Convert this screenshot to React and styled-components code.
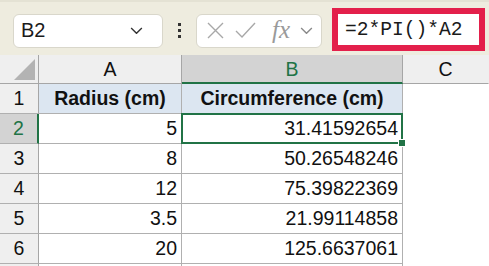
import React from "react";
import styled, { createGlobalStyle } from "styled-components";

const Global = createGlobalStyle`
  html, body { margin: 0; padding: 0; background: #ffffff; overflow: hidden; }
  body { font-family: "Liberation Sans", Arial, sans-serif; }
`;

const GREEN = "#217346";

const Page = styled.div`
  width: 489px;
  height: 266px;
  overflow: hidden;
  display: flex;
  flex-direction: column;
`;

const Toolbar = styled.div`
  height: 55px;
  flex: none;
  box-sizing: border-box;
  background: #eeecdf;
  border-top: 2px solid #e4e2d4;
  display: flex;
  align-items: center;
  padding-left: 13px;
`;

const NameBox = styled.div`
  width: 150px;
  height: 34px;
  box-sizing: border-box;
  background: #fff;
  border: 1px solid #d9d7cb;
  border-radius: 6px;
  display: flex;
  align-items: center;
  justify-content: space-between;
  padding: 0 19px 0 7px;
  margin-top: 4px;
  font-size: 20px;
  color: #1a1a1a;
`;

const Dots = styled.div`
  margin: 4px 0 0 15px;
  display: flex;
  flex-direction: column;
  gap: 3px;
  & > span { width: 3px; height: 3px; background: #333; display: block; }
`;

const FxBox = styled.div`
  margin: 4px 0 0 15px;
  width: 126px;
  height: 34px;
  box-sizing: border-box;
  background: #fff;
  border: 1px solid #d9d7cb;
  border-radius: 6px;
  display: flex;
  align-items: center;
  padding-left: 9px;
  gap: 10px;
`;

const FxText = styled.span`
  font-family: "Liberation Serif", "Times New Roman", serif;
  font-style: italic;
  font-size: 25px;
  color: #9a9a9a;
  margin-left: 6px;
  margin-top: -2px;
`;

const FormulaBox = styled.div`
  margin: 2px 0 0 10px;
  width: 153px;
  height: 43px;
  box-sizing: border-box;
  border: 6px solid #e3204b;
  background: #fff;
  display: flex;
  align-items: center;
  padding-left: 7px;
  font-family: "Liberation Mono", "Courier New", monospace;
  font-size: 19.6px;
  color: #1a1a1a;
`;

const Sheet = styled.div`
  flex: 1;
  display: grid;
  grid-template-columns: 39px 143px 221px 86px;
  grid-template-rows: 29px repeat(7, 30px);
  font-size: 19.5px;
  color: #111;
`;

const Corner = styled.div`
  background: #efefef;
  border-right: 1px solid #a6a6a6;
  border-bottom: 1px solid #a6a6a6;
  position: relative;
  &::after {
    content: "";
    position: absolute;
    right: 3px;
    bottom: 3px;
    width: 0;
    height: 0;
    border-left: 21px solid transparent;
    border-bottom: 21px solid #b3b3b3;
  }
`;

const ColHead = styled.div`
  background: ${(p) => (p.$active ? "#d3d3d3" : "#efefef")};
  color: ${(p) => (p.$active ? GREEN : "#111")};
  border-right: 1px solid ${(p) => (p.$last ? "transparent" : "#a6a6a6")};
  border-bottom: ${(p) => (p.$active ? `2px solid ${GREEN}` : "1px solid #a6a6a6")};
  display: flex;
  align-items: center;
  justify-content: center;
  padding-top: 1px;
`;

const RowHead = styled.div`
  background: ${(p) => (p.$active ? "#d3d3d3" : "#efefef")};
  color: ${(p) => (p.$active ? GREEN : "#111")};
  border-right: ${(p) => (p.$active ? `2px solid ${GREEN}` : "1px solid #a6a6a6")};
  border-bottom: 1px solid #b0b0b0;
  display: flex;
  align-items: center;
  justify-content: center;
`;

const Cell = styled.div`
  background: ${(p) => (p.$header ? "#dce6f1" : "#fff")};
  font-weight: ${(p) => (p.$header ? 700 : 400)};
  border-right: 1px solid ${(p) => (p.$plain ? "transparent" : "#b0b0b0")};
  border-bottom: 1px solid ${(p) => (p.$plain ? "transparent" : "#b0b0b0")};
  display: flex;
  align-items: center;
  justify-content: ${(p) => (p.$header ? "center" : "flex-end")};
  padding: 0 4px;
  box-sizing: border-box;
  white-space: nowrap;
  position: relative;
  ${(p) =>
    p.$selected &&
    `
    &::before {
      content: "";
      position: absolute;
      left: -1px; top: -1px; right: -1px; bottom: -1px;
      border: 2px solid ${GREEN};
      pointer-events: none;
    }
    &::after {
      content: "";
      position: absolute;
      right: -4px; bottom: -4px;
      width: 6px; height: 6px;
      background: ${GREEN};
      border: 1px solid #fff;
      z-index: 2;
    }
  `}
`;

const XIcon = () => (
  <svg width="19" height="19" viewBox="0 0 19 19">
    <path d="M2 2 L17 17 M17 2 L2 17" stroke="#a8a8a8" strokeWidth="1.4" fill="none" />
  </svg>
);
const CheckIcon = () => (
  <svg width="21" height="19" viewBox="0 0 21 19">
    <path d="M1 10 L7 16 L20 2" stroke="#a8a8a8" strokeWidth="1.4" fill="none" />
  </svg>
);
const Chevron = ({ size = 13, color = "#333" }) => (
  <svg width={size} height={size * 0.6} viewBox="0 0 13 8">
    <path d="M1 1 L6.5 6.5 L12 1" stroke={color} strokeWidth="1.4" fill="none" />
  </svg>
);

const rows = [
  ["5", "31.41592654"],
  ["8", "50.26548246"],
  ["12", "75.39822369"],
  ["3.5", "21.99114858"],
  ["20", "125.6637061"],
];

export default function App() {
  return (
    <Page>
      <Global />
      <Toolbar>
        <NameBox>
          <span>B2</span>
          <Chevron />
        </NameBox>
        <Dots>
          <span />
          <span />
          <span />
        </Dots>
        <FxBox>
          <XIcon />
          <CheckIcon />
          <FxText>fx</FxText>
          <Chevron size={13} color="#8a8a8a" />
        </FxBox>
        <FormulaBox>=2*PI()*A2</FormulaBox>
      </Toolbar>
      <Sheet>
        <Corner />
        <ColHead>A</ColHead>
        <ColHead $active>B</ColHead>
        <ColHead $last>C</ColHead>

        <RowHead>1</RowHead>
        <Cell $header>Radius (cm)</Cell>
        <Cell $header>Circumference (cm)</Cell>
        <Cell $plain />

        {rows.map((r, i) => (
          <React.Fragment key={i}>
            <RowHead $active={i === 0}>{i + 2}</RowHead>
            <Cell>{r[0]}</Cell>
            <Cell $selected={i === 0}>{r[1]}</Cell>
            <Cell $plain />
          </React.Fragment>
        ))}
        <RowHead />
        <Cell />
        <Cell />
        <Cell $plain />
      </Sheet>
    </Page>
  );
}
